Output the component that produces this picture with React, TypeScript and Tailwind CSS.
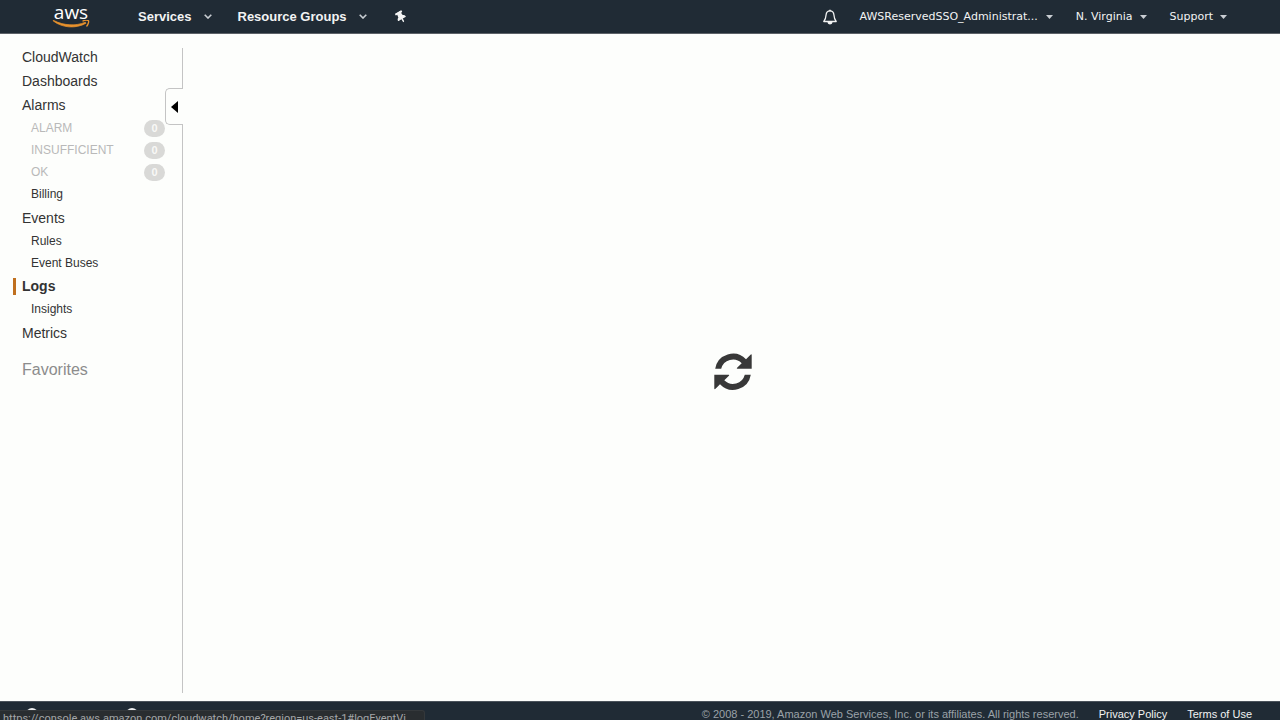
import type { ReactNode } from "react";
import { FaThumbtack } from "react-icons/fa";

function AwsLogo() {
  return (
    <a href="#home" aria-label="AWS" className="flex w-[38px] flex-col items-center pb-px">
      <span className="font-['Open_Sans',sans-serif] text-[19px] leading-4 font-medium text-white">aws</span>
      <svg viewBox="0 0 38 9" className="h-[9px] w-[38px] shrink-0" aria-hidden="true">
        <path d="M1 .8C10 8 24 9 34 3.2l-.7-1C24 6.200 12 5.800 1.300 .3z" fill="#e8922d" stroke="#e8922d" strokeWidth=".7" />
        <path d="M30.500 1.300c2-1.100 5-1.300 6-.6.5 1-.3 4-2 5.800" fill="none" stroke="#e8922d" strokeWidth="1.300" />
      </svg>
    </a>
  );
}

function Chevron() {
  return (
    <svg viewBox="0 0 8 5" className="h-[5px] w-2" fill="none" stroke="#c9ced3" strokeWidth="1.600" aria-hidden="true">
      <path d="M.7.7 4 4 7.300.7" />
    </svg>
  );
}

function Caret() {
  return (
    <svg viewBox="0 0 7 4" className="h-1 w-[7px]" fill="#c9ced3" aria-hidden="true">
      <path d="M0 0h7L3.500 4z" />
    </svg>
  );
}

function Bell() {
  return (
    <svg viewBox="0 0 14 16" className="h-4 w-[14px]" fill="none" stroke="#f2f3f3" strokeWidth="1.300" strokeLinejoin="round" aria-hidden="true">
      <path d="M7 1.800c-2.500 0-3.700 1.700-3.900 4C2.900 9 2.400 10.600.8 12.500h12.400c-1.600-1.900-2.100-3.500-2.300-6.700-.2-2.300-1.400-4-3.900-4z" />
      <path d="M6.200 1.500h1.600M5.200 13.500c.4 1.700 3.200 1.700 3.600 0z" fill="#f2f3f3" />
    </svg>
  );
}

function Header() {
  const menu = "flex items-center";
  return (
    <header className="flex h-[34px] shrink-0 items-center border-b border-[#5d6268] bg-[#202b35] pr-[53px] pl-[52px] whitespace-nowrap text-[#f2f3f3]">
      <AwsLogo />
      <nav className="ml-12 flex items-center text-[13px] font-bold">
        <button type="button" className={`${menu} gap-3`}>Services <Chevron /></button>
        <button type="button" className={`${menu} ml-[26px] gap-3`}>Resource Groups <Chevron /></button>
        <button type="button" aria-label="Pin shortcuts" className="ml-7">
          <FaThumbtack className="size-3 -rotate-30" />
        </button>
      </nav>
      <div className="ml-auto flex items-center font-['DejaVu_Sans',sans-serif] text-[11px]">
        <button type="button" aria-label="Notifications" className="mr-[22px]"><Bell /></button>
        <button type="button" className={`${menu} gap-2`}>
          <span className="pt-0.5">AWSReservedSSO_Administrat...</span> <Caret />
        </button>
        <button type="button" className={`${menu} ml-[23px] gap-[7px]`}>
          <span className="pt-0.5">N. Virginia</span> <Caret />
        </button>
        <button type="button" className={`${menu} ml-[23px] gap-[7px]`}>
          <span className="pt-0.5">Support</span> <Caret />
        </button>
      </div>
    </header>
  );
}

function Item({ children, active = false }: { children: ReactNode; active?: boolean }) {
  return (
    <a
      href="#section"
      className={`flex h-6 items-center text-[14px] ${active ? "font-bold" : ""}`}
    >
      <span className={`w-[9px] border-l-[3px] ${active ? "h-[17px] border-[#c0701f]" : "border-transparent"}`} />
      {children}
    </a>
  );
}

function SubItem({ children, count }: { children: ReactNode; count?: number }) {
  const muted = count !== undefined;
  return (
    <a
      href="#page"
      className={`flex h-[22px] items-center justify-between pl-[18px] text-[12px] ${muted ? "text-[#b9b9b9]" : ""}`}
    >
      {children}
      {muted && (
        <span className="flex h-[17px] w-[21px] items-center justify-center rounded-full bg-[#d9d9d7] text-[11px] font-bold text-[#f8f8f6]">
          {count}
        </span>
      )}
    </a>
  );
}

function Sidebar() {
  return (
    <aside className="flex w-[183px] shrink-0 text-[#333333]">
      <nav className="flex flex-1 flex-col pt-[11px] pl-[13px]">
        <Item>CloudWatch</Item>
        <Item>Dashboards</Item>
        <Item>Alarms</Item>
        <div className="pb-px">
          <SubItem count={0}>ALARM</SubItem>
          <SubItem count={0}>INSUFFICIENT</SubItem>
          <SubItem count={0}>OK</SubItem>
          <SubItem>Billing</SubItem>
        </div>
        <Item>Events</Item>
        <div>
          <SubItem>Rules</SubItem>
          <SubItem>Event Buses</SubItem>
        </div>
        <Item active>Logs</Item>
        <div className="pb-px">
          <SubItem>Insights</SubItem>
        </div>
        <Item>Metrics</Item>
        <h2 className="mt-[13px] pl-[9px] text-[16px] leading-6 text-[#8c8c8c]">Favorites</h2>
      </nav>
      <div className="flex w-[18px] flex-col pt-[14px] pb-2">
        <div className="h-10 border-r border-[#c4c4c4]" />
        <button
          type="button"
          aria-label="Collapse navigation"
          className="flex h-[37px] items-center rounded-l-[5px] border border-r-0 border-[#c4c4c4] pl-[5px]"
        >
          <svg viewBox="0 0 7 12" className="h-3 w-[7px]" aria-hidden="true">
            <path d="M7 0v12L0 6z" fill="#000" />
          </svg>
        </button>
        <div className="flex-1 border-r border-[#c4c4c4]" />
      </div>
    </aside>
  );
}

function RefreshIcon() {
  const arrow =
    "M1.200 15.700A18 18 0 0 1 32 6.200L36.500 1.700Q37.700.7 37.700 2V15.700H23.300Q22.400 15.500 23.100 14.700L27.700 10.200A12.200 12.200 0 0 0 7.200 15.700Z";
  return (
    <svg viewBox="0 0 38 38" className="size-[38px]" fill="#383838" role="img" aria-label="Loading">
      <path d={arrow} />
      <path d={arrow} transform="rotate(180 19 18.700)" />
    </svg>
  );
}

function Footer() {
  return (
    <footer className="flex h-[19px] shrink-0 items-start justify-between overflow-hidden border-t border-[#4b535b] bg-[#202b35] text-[11px] leading-4 whitespace-nowrap text-[#9ba2a8]">
      <div className="flex gap-[88px] pt-[6px] pl-[26px]" aria-hidden="true">
        <span className="size-3 rounded-full bg-[#eceeef]" />
        <span className="size-3 rounded-full bg-[#eceeef]" />
      </div>
      <div className="flex gap-5 pt-1 pr-7">
        <span>© 2008 - 2019, Amazon Web Services, Inc. or its affiliates. All rights reserved.</span>
        <a href="#privacy" className="text-[#f2f3f3]">Privacy Policy</a>
        <a href="#terms" className="text-[#f2f3f3]">Terms of Use</a>
      </div>
    </footer>
  );
}

export default function App() {
  return (
    <div className="relative flex h-screen flex-col overflow-hidden bg-[#fdfefc] font-['Liberation_Sans',Arial,sans-serif]">
      <Header />
      <div className="flex min-h-0 flex-1">
        <Sidebar />
        <main className="flex flex-1 items-center justify-center pt-2 pl-[3px]">
          <RefreshIcon />
        </main>
      </div>
      <Footer />
      <div className="absolute bottom-0 left-0 h-[10px] w-[425px] overflow-hidden rounded-tr-[3px] border-t border-r border-[#34383b] bg-[#292d30] pl-[3px] font-[Roboto,sans-serif] text-[11px] leading-4 whitespace-nowrap text-[#a4a6a8]">
        https://console.aws.amazon.com/cloudwatch/home?region=us-east-1#logEventVi
      </div>
    </div>
  );
}
